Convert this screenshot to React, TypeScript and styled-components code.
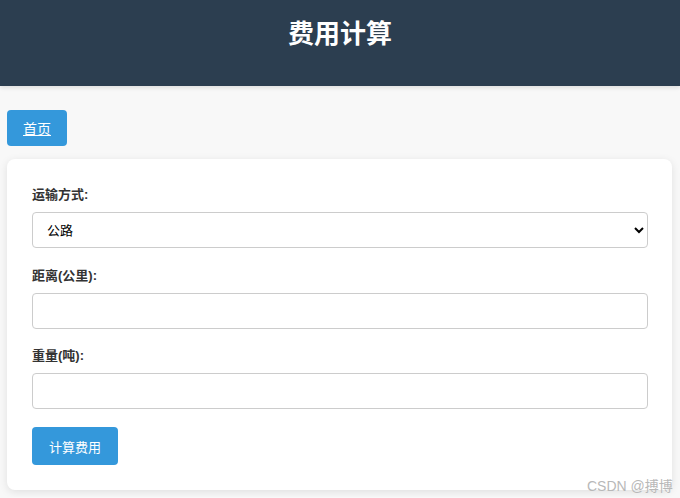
import styled, { createGlobalStyle } from "styled-components";

const GlobalStyle = createGlobalStyle`
  html, body {
    margin: 0;
    padding: 0;
    background: #f8f8f8;
    font-family: "Liberation Sans", "Noto Sans CJK SC", sans-serif;
  }
`;

export default function App() {
  return (
    <>
      <GlobalStyle />
      <Header>
        <Title>费用计算</Title>
      </Header>
      <Main>
        <HomeLink href="#">首页</HomeLink>
        <Card>
          <FormGroup>
            <Label>运输方式:</Label>
            <Select defaultValue="road">
              <option value="road">公路</option>
              <option value="rail">铁路</option>
              <option value="water">水路</option>
            </Select>
          </FormGroup>
          <FormGroup>
            <Label>距离(公里):</Label>
            <Input type="text" />
          </FormGroup>
          <FormGroup>
            <Label>重量(吨):</Label>
            <Input type="text" />
          </FormGroup>
          <SubmitButton>计算费用</SubmitButton>
        </Card>
      </Main>
      <Watermark>CSDN @搏博</Watermark>
    </>
  );
}

const Header = styled.header`
  height: 86px;
  background: #2c3e50;
  box-shadow: 0 2px 4px rgba(0, 0, 0, 0.1);
  display: flex;
  justify-content: center;
  box-sizing: border-box;
  padding-top: 15px;
`;

const Title = styled.h1`
  margin: 0;
  color: #fff;
  font-size: 26px;
  line-height: 38px;
  font-weight: bold;
`;

const Main = styled.main`
  padding: 24px 8px 7px 7px;
`;

const HomeLink = styled.a`
  display: inline-flex;
  align-items: center;
  justify-content: center;
  width: 60px;
  height: 36px;
  background: #3498db;
  color: #fff;
  border-radius: 4px;
  font-size: 14px;
  text-decoration: underline;
`;

const Card = styled.div`
  margin-top: 13px;
  background: #fff;
  border-radius: 8px;
  box-shadow: 0 2px 8px rgba(0, 0, 0, 0.1);
  padding: 26px 24px 25px 25px;
`;

const FormGroup = styled.div`
  margin-bottom: 18px;

  &:nth-child(2) {
    margin-bottom: 17px;
  }
`;

const Label = styled.label`
  display: block;
  font-size: 13px;
  line-height: 20px;
  font-weight: bold;
  color: #333;
  margin-bottom: 7px;
`;

const Select = styled.select`
  display: block;
  width: 100%;
  height: 36px;
  box-sizing: border-box;
  border: 1px solid #ccc;
  border-radius: 4px;
  background: #fff;
  padding: 0 10px;
  font-size: 13px;
  font-family: inherit;
  color: #000;
`;

const Input = styled.input`
  display: block;
  width: 100%;
  height: 36px;
  box-sizing: border-box;
  border: 1px solid #ccc;
  border-radius: 4px;
  padding: 0 10px;
  font-size: 13px;
  font-family: inherit;
`;

const SubmitButton = styled.button`
  width: 86px;
  height: 38px;
  border: none;
  border-radius: 4px;
  background: #3498db;
  color: #fff;
  font-size: 13px;
  font-family: inherit;
  cursor: pointer;
`;

const Watermark = styled.div`
  position: absolute;
  left: 587px;
  top: 475px;
  font-size: 14px;
  color: #b8b8b8;
`;
